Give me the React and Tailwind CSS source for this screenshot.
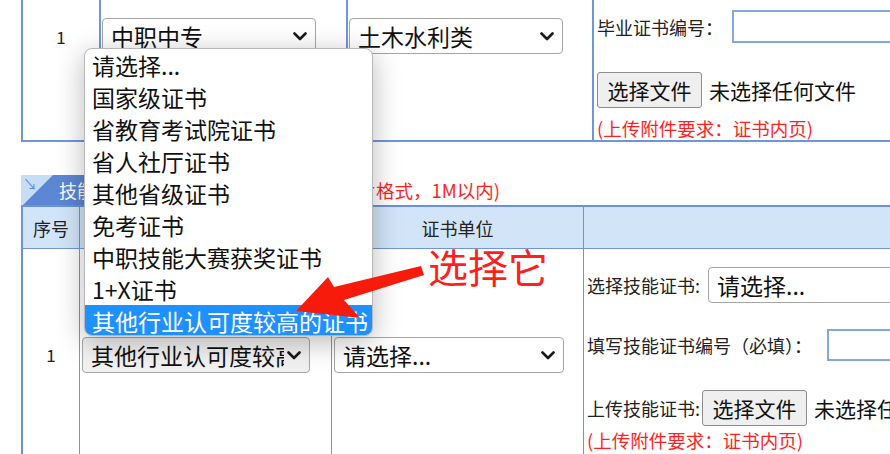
const options = [
  "请选择...",
  "国家级证书",
  "省教育考试院证书",
  "省人社厅证书",
  "其他省级证书",
  "免考证书",
  "中职技能大赛获奖证书",
  "1+X证书",
  "其他行业认可度较高的证书",
];

const Chevron = () => (
  <svg width="14" height="9" viewBox="0 0 14 9" className="shrink-0 ml-[3px]">
    <polyline points="1.5,1.5 7,7 12.5,1.5" fill="none" stroke="#1a1a1a" strokeWidth="2.6" strokeLinecap="round" strokeLinejoin="round" />
  </svg>
);

const Select = ({ value, className = "", width }) => (
  <div
    className={`shrink-0 flex items-center h-[36px] border border-[#a5a5a5] rounded-[4px] pl-[8px] pr-[8px] ${className}`}
    style={{ width }}
  >
    <span className="flex-1 overflow-hidden whitespace-nowrap text-[23px] leading-[30px] text-[#111]">
      {value}
    </span>
    <Chevron />
  </div>
);

const FileButton = () => (
  <div className="flex items-center shrink-0">
    <div className="flex items-center justify-center w-[105px] h-[36px] bg-[#efefef] border border-[#8c8c8c] rounded-[3px] text-[21px] leading-[28px] text-[#111]">
      选择文件
    </div>
    <span className="ml-[7px] text-[21px] leading-[28px] text-[#111] whitespace-nowrap">
      未选择任何文件
    </span>
  </div>
);

const App = () => {
  return (
    <div className="relative w-[890px] h-[454px] overflow-hidden bg-white font-['Noto_Sans_CJK_SC','Microsoft_YaHei',sans-serif] text-[#222]">
      {/* upper table, its row starts above the window */}
      <div className="ml-[21px] w-[1000px] h-[142px] flex border-l-2 border-b-2 border-[#7096da]">
        <div className="w-[78px] shrink-0 border-r-2 border-[#7096da] text-center pt-[26px] text-[17px] leading-[22px]">
          1
        </div>
        <div className="w-[247px] shrink-0 border-r-2 border-[#7096da] pl-[1px] pt-[18px]">
          <Select value="中职中专" width={214} />
        </div>
        <div className="w-[246px] shrink-0 border-r-2 border-[#7096da] pl-[1px] pt-[18px]">
          <Select value="土木水利类" width={214} />
        </div>
        <div className="flex-1 pl-[3px] pt-[10px] flex flex-col">
          <div className="flex items-center h-[33px]">
            <span className="w-[135px] shrink-0 text-[18px] leading-[22px] whitespace-nowrap">毕业证书编号：</span>
            <div className="w-[240px] shrink-0 h-[33px] border-2 border-[#86a6e0]" />
          </div>
          <div className="mt-[29px]">
            <FileButton />
          </div>
          <div className="mt-[9px] text-[18.5px] leading-[22px] text-[#ff1f1f] whitespace-nowrap">
            (上传附件要求：证书内页)
          </div>
        </div>
      </div>

      {/* section title */}
      <div className="mt-[33px] ml-[21px] w-[479px] h-[30px] flex items-center">
        <div className="relative w-[180px] shrink-0 h-[30px] bg-[#5b87d4] overflow-hidden">
          <div className="absolute left-0 top-0 w-0 h-0 border-t-[32px] border-r-[32px] border-t-[#c7ddf6] border-r-transparent" />
          <span className="absolute left-[2px] top-[-1px] text-[14px] leading-[18px] text-[#5b87d4]">↘</span>
          <span className="absolute left-[38px] top-[4px] text-[18px] leading-[22px] text-white whitespace-nowrap">
            技能证书
          </span>
        </div>
        <div className="flex-1 text-right text-[18.5px] leading-[22px] text-[#ff1f1f] whitespace-nowrap">
          (上传附件要求：图片格式，1M以内)
        </div>
      </div>

      {/* lower table */}
      <div className="ml-[21px] w-[1000px] border-l-2 border-t-2 border-[#6b91d8]">
        <div className="flex h-[42px] bg-[#d2e5f8] border-b border-[#7096da]">
          <div className="w-[57px] shrink-0 border-r border-[#7096da] flex items-center justify-center text-[18px] leading-[22px]">
            序号
          </div>
          <div className="w-[252px] shrink-0 border-r border-[#7096da] flex items-center justify-center text-[18px] leading-[22px]">
            证书类型
          </div>
          <div className="w-[252px] shrink-0 border-r border-[#7096da] flex items-center justify-center text-[18px] leading-[22px]">
            证书单位
          </div>
          <div className="flex-1" />
        </div>
        <div className="flex h-[212px]">
          <div className="w-[57px] shrink-0 border-r border-[#7096da] flex items-center justify-center text-[17px] leading-[22px]">
            1
          </div>
          <div className="w-[252px] shrink-0 border-r border-[#7096da] flex items-center pl-[2px]">
            <Select value="其他行业认可度较高的证书" width={228} className="bg-[#f1f1f1]" />
          </div>
          <div className="w-[252px] shrink-0 border-r border-[#7096da] flex items-center pl-[2px]">
            <Select value="请选择..." width={230} />
          </div>
          <div className="flex-1 pl-[3px] pt-[18px] flex flex-col">
            <div className="flex items-center h-[36px]">
              <span className="w-[121px] shrink-0 text-[18px] leading-[22px] whitespace-nowrap">选择技能证书:</span>
              <Select value="请选择..." width={230} />
            </div>
            <div className="flex items-center h-[32px] mt-[26px]">
              <span className="w-[240px] shrink-0 text-[18px] leading-[22px] whitespace-nowrap">填写技能证书编号（必填）：</span>
              <div className="w-[200px] shrink-0 h-[32px] border-2 border-[#86a6e0]" />
            </div>
            <div className="flex items-center mt-[29px]">
              <span className="w-[115px] shrink-0 text-[18px] leading-[22px] whitespace-nowrap">上传技能证书:</span>
              <FileButton />
            </div>
            <div className="mt-[3px] text-[18.5px] leading-[22px] text-[#ff1f1f] whitespace-nowrap">
              (上传附件要求：证书内页)
            </div>
          </div>
        </div>
      </div>

      {/* open dropdown list */}
      <div className="absolute left-[84px] top-[48px] w-[289px] h-[288px] bg-white border border-[#b8b8b8] rounded-[8px] overflow-hidden shadow-[0_6px_28px_rgba(0,0,0,0.28)]">
        {options.map((o, i) => (
          <div
            key={o}
            className={`h-[32px] pl-[7px] flex items-center whitespace-nowrap text-[23px] leading-[28px] ${
              i === options.length - 1 ? "bg-[#1e90ff] text-white" : "text-[#111]"
            }`}
          >
            {o}
          </div>
        ))}
      </div>

      {/* annotation */}
      <div className="absolute left-[428px] top-[244px] text-[40px] leading-[44px] text-[#ff1f1f] whitespace-nowrap">
        选择它
      </div>
      <svg className="absolute left-0 top-0 pointer-events-none" width="890" height="454" viewBox="0 0 890 454">
        <polygon
          points="296,311 328,277 334,287 421,266 424,275 344,300 360,318"
          fill="#f71b0c"
        />
      </svg>
    </div>
  );
};

export default App;
